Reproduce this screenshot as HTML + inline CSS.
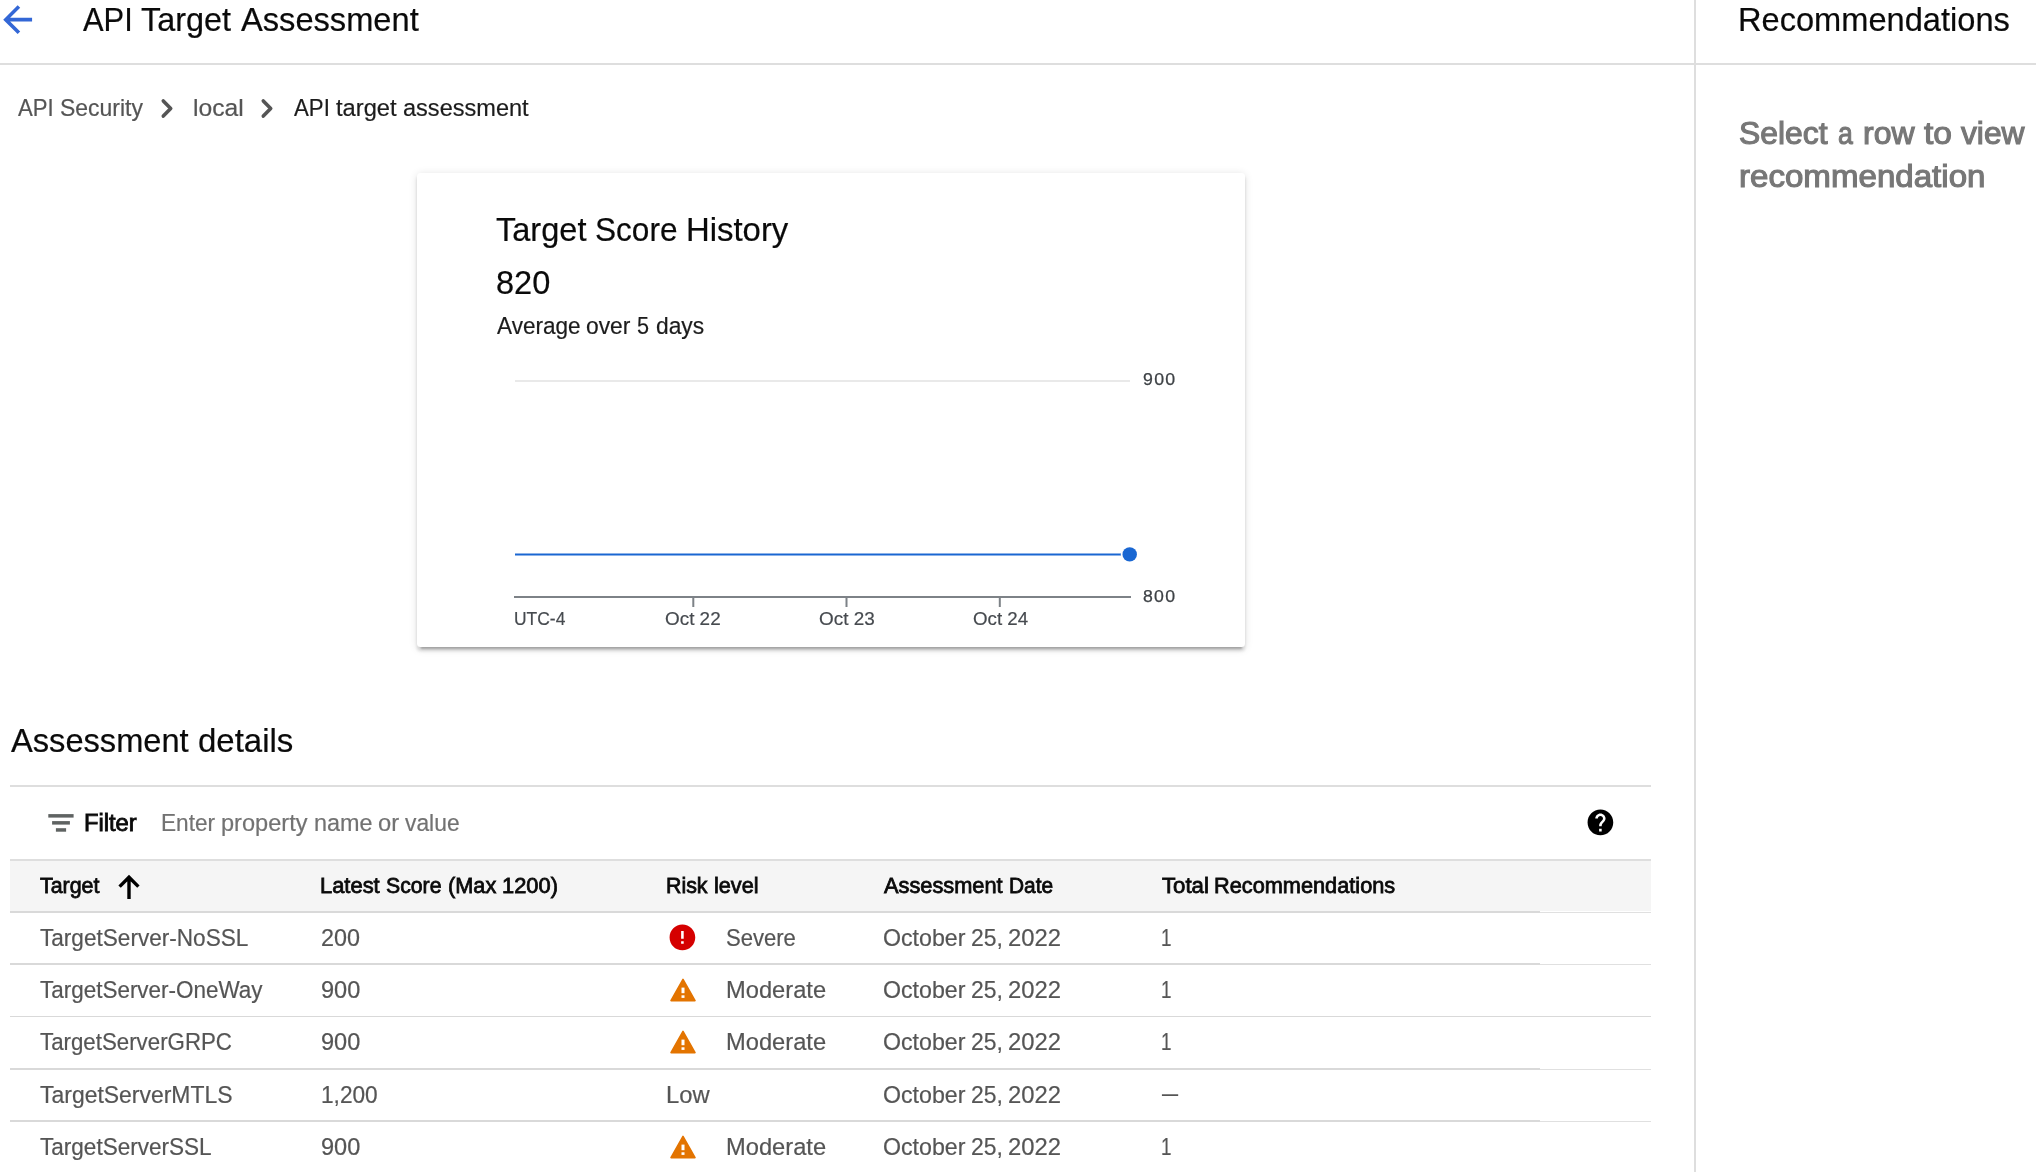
<!DOCTYPE html>
<html lang="en"><head><meta charset="utf-8"><title>API Target Assessment</title>
<style>
html,body{margin:0;padding:0;background:#fff}
body{width:2036px;height:1172px;position:relative;overflow:hidden;font-family:"Liberation Sans",sans-serif;-webkit-font-smoothing:antialiased}
.t{position:absolute;white-space:nowrap;transform-origin:0 0;margin:0;font-weight:normal;display:block}
.w{position:absolute;left:0;top:0;margin:0;font-weight:normal;font-size:0;display:block}
.ln{position:absolute}
svg{position:absolute;overflow:visible}
.card{position:absolute;left:417px;top:173px;width:828px;height:474px;background:#fff;border-radius:3.5px;box-shadow:0 5px 1.8px -3.5px rgba(0,0,0,.2),0 3.5px 3.5px 0 rgba(0,0,0,.14),0 1.8px 9px 0 rgba(0,0,0,.12)}
.thead{position:absolute;left:10px;top:861px;width:1641px;height:50px;background:#f5f5f5}
#app{position:absolute;left:0;top:0;width:2036px;height:1172px;will-change:transform}
</style></head><body><div id="app">

<header>
<svg style="left:-3.9px;top:-1.6px" width="43.3" height="43.3" viewBox="0 0 24 24"><path fill="#3367d6" d="M20 11H7.83l5.59-5.59L12 4l-8 8 8 8 1.41-1.41L7.83 13H20v-2z"/></svg>
<h1 class="w"><span class="t" style="left:83.03px;top:-4px;font-size:32.8px;line-height:47px;color:#0a0a0a;transform:scaleX(0.9412);-webkit-text-stroke:0.2px">API</span> <span class="t" style="left:141.10px;top:-4px;font-size:32.8px;line-height:47px;color:#0a0a0a;transform:scaleX(0.9873);-webkit-text-stroke:0.2px">Target</span> <span class="t" style="left:240.61px;top:-4px;font-size:32.8px;line-height:47px;color:#0a0a0a;transform:scaleX(0.9950);-webkit-text-stroke:0.2px">Assessment</span></h1>
<div class="ln" style="left:0px;top:63px;width:2036px;height:2px;background:#dedede"></div>
</header>
<nav>
<a class="w"><span class="t" style="left:18.05px;top:90px;font-size:23.7px;line-height:36px;color:#555;transform:scaleX(0.9344);-webkit-text-stroke:0.2px">API</span> <span class="t" style="left:59.58px;top:90px;font-size:23.7px;line-height:36px;color:#555;transform:scaleX(0.9695);-webkit-text-stroke:0.2px">Security</span></a>
<svg style="left:150.0px;top:90px" width="40" height="40" viewBox="0 0 40 40"><path fill="none" stroke="#555" stroke-width="3.6" stroke-linecap="round" stroke-linejoin="round" d="M13.3 10.9L20.7 18.5L13.3 26.1"/></svg>
<a class="t" style="left:193.24px;top:90px;font-size:23.7px;line-height:36px;color:#555;transform:scaleX(1.0407);-webkit-text-stroke:0.2px">local</a>
<svg style="left:249.9px;top:90px" width="40" height="40" viewBox="0 0 40 40"><path fill="none" stroke="#555" stroke-width="3.6" stroke-linecap="round" stroke-linejoin="round" d="M13.3 10.9L20.7 18.5L13.3 26.1"/></svg>
<span class="w"><span class="t" style="left:294.25px;top:90px;font-size:23.7px;line-height:36px;color:#1c1c1c;transform:scaleX(0.9386);-webkit-text-stroke:0.2px">API</span> <span class="t" style="left:335.84px;top:90px;font-size:23.7px;line-height:36px;color:#1c1c1c;transform:scaleX(1.0006);-webkit-text-stroke:0.2px">target</span> <span class="t" style="left:403.32px;top:90px;font-size:23.7px;line-height:36px;color:#1c1c1c;transform:scaleX(0.9942);-webkit-text-stroke:0.2px">assessment</span></span>
</nav>
<section class="card"></section>
<h2 class="w"><span class="t" style="left:496.07px;top:206px;font-size:32.8px;line-height:47px;color:#0a0a0a;transform:scaleX(0.9920);-webkit-text-stroke:0.2px">Target</span> <span class="t" style="left:595.43px;top:206px;font-size:32.8px;line-height:47px;color:#0a0a0a;transform:scaleX(0.9627);-webkit-text-stroke:0.2px">Score</span> <span class="t" style="left:685.88px;top:206px;font-size:32.8px;line-height:47px;color:#0a0a0a;transform:scaleX(1.0023);-webkit-text-stroke:0.2px">History</span></h2>
<div class="t" style="left:495.99px;top:259px;font-size:32.8px;line-height:47px;color:#0a0a0a;transform:scaleX(0.9918);-webkit-text-stroke:0.2px">820</div>
<div class="w"><span class="t" style="left:496.75px;top:308px;font-size:23.7px;line-height:36px;color:#1c1c1c;transform:scaleX(0.9518);-webkit-text-stroke:0.2px">Average</span> <span class="t" style="left:586.26px;top:308px;font-size:23.7px;line-height:36px;color:#1c1c1c;transform:scaleX(0.9629);-webkit-text-stroke:0.2px">over</span> <span class="t" style="left:637.48px;top:308px;font-size:23.7px;line-height:36px;color:#1c1c1c;transform:scaleX(0.9132);-webkit-text-stroke:0.2px">5</span> <span class="t" style="left:655.65px;top:308px;font-size:23.7px;line-height:36px;color:#1c1c1c;transform:scaleX(0.9627);-webkit-text-stroke:0.2px">days</span></div>
<svg style="left:0;top:0" width="2036" height="700" viewBox="0 0 2036 700">
<rect x="515" y="380" width="615" height="2" fill="#e9e9e9"/>
<rect x="514" y="596" width="617" height="2" fill="#7d8287"/>
<rect x="692.3" y="597" width="2" height="10" fill="#7d8287"/>
<rect x="845.5" y="597" width="2" height="10" fill="#7d8287"/>
<rect x="998.8" y="597" width="2" height="10" fill="#7d8287"/>
<line x1="515" y1="554.5" x2="1129" y2="554.5" stroke="#1a67d2" stroke-width="2.1"/>
<circle cx="1129.7" cy="554.4" r="8.9" fill="#fff"/>
<circle cx="1129.7" cy="554.4" r="7.2" fill="#1a67d2"/>
</svg>
<span class="t" style="left:513.85px;top:603px;font-size:18.7px;line-height:31px;color:#464a4f;transform:scaleX(0.9335);-webkit-text-stroke:0.2px">UTC-4</span>
<span class="t" style="left:664.81px;top:603px;font-size:18.7px;line-height:31px;color:#464a4f;transform:scaleX(1.0105);-webkit-text-stroke:0.2px">Oct 22</span>
<span class="t" style="left:818.90px;top:603px;font-size:18.7px;line-height:31px;color:#464a4f;transform:scaleX(1.0120);-webkit-text-stroke:0.2px">Oct 23</span>
<span class="t" style="left:972.91px;top:603px;font-size:18.7px;line-height:31px;color:#464a4f;transform:scaleX(1.0013);-webkit-text-stroke:0.2px">Oct 24</span>
<span class="t" style="left:1142.90px;top:365px;font-size:16.6px;line-height:29px;color:#3e4246;transform:scaleX(1.0685);letter-spacing:1.2px;-webkit-text-stroke:0.25px">900</span>
<span class="t" style="left:1142.96px;top:582px;font-size:16.6px;line-height:29px;color:#3e4246;transform:scaleX(1.0664);letter-spacing:1.2px;-webkit-text-stroke:0.25px">800</span>
<h2 class="w"><span class="t" style="left:11.34px;top:717px;font-size:32.8px;line-height:47px;color:#0a0a0a;transform:scaleX(0.9947);-webkit-text-stroke:0.2px">Assessment</span> <span class="t" style="left:198.24px;top:717px;font-size:32.8px;line-height:47px;color:#0a0a0a;transform:scaleX(1.0057);-webkit-text-stroke:0.2px">details</span></h2>
<div class="ln" style="left:10px;top:785px;width:1641px;height:2px;background:#dedede"></div>
<svg style="left:0;top:800px" width="120" height="45" viewBox="0 800 120 45"><g fill="#5f6362"><rect x="48.3" y="814.1" width="25.3" height="3.5"/><rect x="52.1" y="821.1" width="17.8" height="3.5"/><rect x="55.9" y="828.2" width="10.2" height="3.5"/></g></svg>
<span class="t" style="left:84.08px;top:805px;font-size:23.1px;line-height:36px;color:#0a0a0a;transform:scaleX(1.0265);-webkit-text-stroke:0.83px">Filter</span>
<span class="w"><span class="t" style="left:160.74px;top:805px;font-size:23.7px;line-height:36px;color:#727272;transform:scaleX(0.9541);-webkit-text-stroke:0.2px">Enter</span> <span class="t" style="left:220.82px;top:805px;font-size:23.7px;line-height:36px;color:#727272;transform:scaleX(0.9955);-webkit-text-stroke:0.2px">property</span> <span class="t" style="left:313.64px;top:805px;font-size:23.7px;line-height:36px;color:#727272;transform:scaleX(0.9880);-webkit-text-stroke:0.2px">name</span> <span class="t" style="left:378.08px;top:805px;font-size:23.7px;line-height:36px;color:#727272;transform:scaleX(1.0012);-webkit-text-stroke:0.2px">or</span> <span class="t" style="left:405.42px;top:805px;font-size:23.7px;line-height:36px;color:#727272;transform:scaleX(0.9640);-webkit-text-stroke:0.2px">value</span></span>
<svg style="left:1584.98px;top:807.2px" width="30.84" height="30.84" viewBox="0 0 24 24"><path fill="#000" d="M12 2C6.48 2 2 6.48 2 12s4.48 10 10 10 10-4.48 10-10S17.52 2 12 2zm1 17h-2v-2h2v2zm2.07-7.75l-.9.92C13.45 12.9 13 13.5 13 15h-2v-.5c0-1.1.45-2.1 1.17-2.83l1.24-1.26c.37-.36.59-.86.59-1.41 0-1.1-.9-2-2-2s-2 .9-2 2H8c0-2.21 1.79-4 4-4s4 1.79 4 4c0 .88-.36 1.68-.93 2.25z"/></svg>
<div class="ln" style="left:10px;top:859px;width:1641px;height:2px;background:#dedede"></div>
<div class="thead"></div>
<div class="t" style="left:40.10px;top:869px;font-size:21.2px;line-height:33px;color:#0a0a0a;transform:scaleX(1.0098);-webkit-text-stroke:0.76px">Target</div>
<div class="w"><span class="t" style="left:320.10px;top:869px;font-size:21.2px;line-height:33px;color:#0a0a0a;transform:scaleX(1.0337);-webkit-text-stroke:0.76px">Latest</span> <span class="t" style="left:386.16px;top:869px;font-size:21.2px;line-height:33px;color:#0a0a0a;transform:scaleX(1.0017);-webkit-text-stroke:0.76px">Score</span> <span class="t" style="left:447.52px;top:869px;font-size:21.2px;line-height:33px;color:#0a0a0a;transform:scaleX(1.0244);-webkit-text-stroke:0.76px">(Max</span> <span class="t" style="left:502.12px;top:869px;font-size:21.2px;line-height:33px;color:#0a0a0a;transform:scaleX(1.0321);-webkit-text-stroke:0.76px">1200)</span></div>
<div class="w"><span class="t" style="left:666.03px;top:869px;font-size:21.2px;line-height:33px;color:#0a0a0a;transform:scaleX(1.0087);-webkit-text-stroke:0.76px">Risk</span> <span class="t" style="left:713.79px;top:869px;font-size:21.2px;line-height:33px;color:#0a0a0a;transform:scaleX(1.0205);-webkit-text-stroke:0.76px">level</span></div>
<div class="w"><span class="t" style="left:884.35px;top:869px;font-size:21.2px;line-height:33px;color:#0a0a0a;transform:scaleX(1.0279);-webkit-text-stroke:0.76px">Assessment</span> <span class="t" style="left:1009.38px;top:869px;font-size:21.2px;line-height:33px;color:#0a0a0a;transform:scaleX(0.9867);-webkit-text-stroke:0.76px">Date</span></div>
<div class="w"><span class="t" style="left:1161.60px;top:869px;font-size:21.2px;line-height:33px;color:#0a0a0a;transform:scaleX(1.0464);-webkit-text-stroke:0.76px">Total</span> <span class="t" style="left:1214.40px;top:869px;font-size:21.2px;line-height:33px;color:#0a0a0a;transform:scaleX(1.0257);-webkit-text-stroke:0.76px">Recommendations</span></div>
<svg style="left:110px;top:868px" width="40" height="40" viewBox="110 868 40 40"><path d="M119.6 886.6 L129 877.2 L138.4 886.6 M129 877.6 V899" fill="none" stroke="#000" stroke-width="3.4"/></svg>
<div class="ln" style="left:10px;top:911px;width:1530px;height:2px;background:#d9d9d9"></div>
<div class="ln" style="left:1540px;top:912px;width:111px;height:1px;background:#e0e0e0"></div>
<div class="ln" style="left:10px;top:963px;width:1530px;height:2px;background:#d9d9d9"></div>
<div class="ln" style="left:1540px;top:964px;width:111px;height:1px;background:#e0e0e0"></div>
<div class="ln" style="left:10px;top:1016px;width:1641px;height:1px;background:#d9d9d9"></div>
<div class="ln" style="left:10px;top:1068px;width:1530px;height:2px;background:#d9d9d9"></div>
<div class="ln" style="left:1540px;top:1069px;width:111px;height:1px;background:#e0e0e0"></div>
<div class="ln" style="left:10px;top:1120px;width:1530px;height:2px;background:#d9d9d9"></div>
<div class="ln" style="left:1540px;top:1121px;width:111px;height:1px;background:#e0e0e0"></div>
<div class="t" style="left:39.79px;top:920px;font-size:23.7px;line-height:36px;color:#555;transform:scaleX(0.9534);-webkit-text-stroke:0.2px">TargetServer-NoSSL</div>
<div class="t" style="left:320.72px;top:920px;font-size:23.7px;line-height:36px;color:#555;transform:scaleX(0.9863);-webkit-text-stroke:0.2px">200</div>
<div class="t" style="left:726.09px;top:920px;font-size:23.7px;line-height:36px;color:#555;transform:scaleX(0.9312);-webkit-text-stroke:0.2px">Severe</div>
<div class="w"><span class="t" style="left:883.00px;top:920px;font-size:23.7px;line-height:36px;color:#555;transform:scaleX(0.9781);-webkit-text-stroke:0.2px">October</span> <span class="t" style="left:971.32px;top:920px;font-size:23.7px;line-height:36px;color:#555;transform:scaleX(0.9673);-webkit-text-stroke:0.2px">25,</span> <span class="t" style="left:1008.09px;top:920px;font-size:23.7px;line-height:36px;color:#555;transform:scaleX(1.0057);-webkit-text-stroke:0.2px">2022</span></div>
<div class="t" style="left:1161.34px;top:920px;font-size:23.7px;line-height:36px;color:#555;transform:scaleX(0.7962);-webkit-text-stroke:0.2px">1</div>
<svg style="left:667.08px;top:922.28px" width="30.84" height="30.84" viewBox="0 0 24 24"><path fill="#d50000" d="M12 2C6.48 2 2 6.48 2 12s4.48 10 10 10 10-4.48 10-10S17.52 2 12 2zm1 15h-2v-2h2v2zm0-4h-2V7h2v6z"/></svg>
<div class="t" style="left:39.79px;top:972px;font-size:23.7px;line-height:36px;color:#555;transform:scaleX(0.9480);-webkit-text-stroke:0.2px">TargetServer-OneWay</div>
<div class="t" style="left:320.79px;top:972px;font-size:23.7px;line-height:36px;color:#555;transform:scaleX(0.9948);-webkit-text-stroke:0.2px">900</div>
<div class="t" style="left:725.86px;top:972px;font-size:23.7px;line-height:36px;color:#555;transform:scaleX(1.0002);-webkit-text-stroke:0.2px">Moderate</div>
<div class="w"><span class="t" style="left:883.00px;top:972px;font-size:23.7px;line-height:36px;color:#555;transform:scaleX(0.9781);-webkit-text-stroke:0.2px">October</span> <span class="t" style="left:971.32px;top:972px;font-size:23.7px;line-height:36px;color:#555;transform:scaleX(0.9673);-webkit-text-stroke:0.2px">25,</span> <span class="t" style="left:1008.09px;top:972px;font-size:23.7px;line-height:36px;color:#555;transform:scaleX(1.0057);-webkit-text-stroke:0.2px">2022</span></div>
<div class="t" style="left:1161.34px;top:972px;font-size:23.7px;line-height:36px;color:#555;transform:scaleX(0.7962);-webkit-text-stroke:0.2px">1</div>
<svg style="left:667.90px;top:974.80px" width="30" height="30" viewBox="0 0 30 30"><path fill="#e37400" stroke="#e37400" stroke-width="1.6" stroke-linejoin="round" d="M15 4.4 L27 25.6 H3 Z"/><rect x="13.5" y="12.6" width="3" height="5.6" fill="#fff"/><rect x="13.5" y="20.3" width="3" height="2.6" fill="#fff"/></svg>
<div class="t" style="left:39.79px;top:1024px;font-size:23.7px;line-height:36px;color:#555;transform:scaleX(0.9408);-webkit-text-stroke:0.2px">TargetServerGRPC</div>
<div class="t" style="left:320.79px;top:1024px;font-size:23.7px;line-height:36px;color:#555;transform:scaleX(0.9948);-webkit-text-stroke:0.2px">900</div>
<div class="t" style="left:725.86px;top:1024px;font-size:23.7px;line-height:36px;color:#555;transform:scaleX(1.0002);-webkit-text-stroke:0.2px">Moderate</div>
<div class="w"><span class="t" style="left:883.00px;top:1024px;font-size:23.7px;line-height:36px;color:#555;transform:scaleX(0.9781);-webkit-text-stroke:0.2px">October</span> <span class="t" style="left:971.32px;top:1024px;font-size:23.7px;line-height:36px;color:#555;transform:scaleX(0.9673);-webkit-text-stroke:0.2px">25,</span> <span class="t" style="left:1008.09px;top:1024px;font-size:23.7px;line-height:36px;color:#555;transform:scaleX(1.0057);-webkit-text-stroke:0.2px">2022</span></div>
<div class="t" style="left:1161.34px;top:1024px;font-size:23.7px;line-height:36px;color:#555;transform:scaleX(0.7962);-webkit-text-stroke:0.2px">1</div>
<svg style="left:667.90px;top:1026.80px" width="30" height="30" viewBox="0 0 30 30"><path fill="#e37400" stroke="#e37400" stroke-width="1.6" stroke-linejoin="round" d="M15 4.4 L27 25.6 H3 Z"/><rect x="13.5" y="12.6" width="3" height="5.6" fill="#fff"/><rect x="13.5" y="20.3" width="3" height="2.6" fill="#fff"/></svg>
<div class="t" style="left:39.78px;top:1077px;font-size:23.7px;line-height:36px;color:#555;transform:scaleX(0.9688);-webkit-text-stroke:0.2px">TargetServerMTLS</div>
<div class="t" style="left:321.17px;top:1077px;font-size:23.7px;line-height:36px;color:#555;transform:scaleX(0.9568);-webkit-text-stroke:0.2px">1,200</div>
<div class="t" style="left:665.55px;top:1077px;font-size:23.7px;line-height:36px;color:#555;transform:scaleX(1.0028);-webkit-text-stroke:0.2px">Low</div>
<div class="w"><span class="t" style="left:883.00px;top:1077px;font-size:23.7px;line-height:36px;color:#555;transform:scaleX(0.9781);-webkit-text-stroke:0.2px">October</span> <span class="t" style="left:971.32px;top:1077px;font-size:23.7px;line-height:36px;color:#555;transform:scaleX(0.9673);-webkit-text-stroke:0.2px">25,</span> <span class="t" style="left:1008.09px;top:1077px;font-size:23.7px;line-height:36px;color:#555;transform:scaleX(1.0057);-webkit-text-stroke:0.2px">2022</span></div>
<div class="t" style="left:1162.37px;top:1075px;font-size:23.7px;line-height:36px;color:#555;transform:scaleX(0.6782);-webkit-text-stroke:0.2px">—</div>
<div class="t" style="left:39.79px;top:1129px;font-size:23.7px;line-height:36px;color:#555;transform:scaleX(0.9517);-webkit-text-stroke:0.2px">TargetServerSSL</div>
<div class="t" style="left:320.79px;top:1129px;font-size:23.7px;line-height:36px;color:#555;transform:scaleX(0.9948);-webkit-text-stroke:0.2px">900</div>
<div class="t" style="left:725.86px;top:1129px;font-size:23.7px;line-height:36px;color:#555;transform:scaleX(1.0002);-webkit-text-stroke:0.2px">Moderate</div>
<div class="w"><span class="t" style="left:883.00px;top:1129px;font-size:23.7px;line-height:36px;color:#555;transform:scaleX(0.9781);-webkit-text-stroke:0.2px">October</span> <span class="t" style="left:971.32px;top:1129px;font-size:23.7px;line-height:36px;color:#555;transform:scaleX(0.9673);-webkit-text-stroke:0.2px">25,</span> <span class="t" style="left:1008.09px;top:1129px;font-size:23.7px;line-height:36px;color:#555;transform:scaleX(1.0057);-webkit-text-stroke:0.2px">2022</span></div>
<div class="t" style="left:1161.34px;top:1129px;font-size:23.7px;line-height:36px;color:#555;transform:scaleX(0.7962);-webkit-text-stroke:0.2px">1</div>
<svg style="left:667.90px;top:1131.70px" width="30" height="30" viewBox="0 0 30 30"><path fill="#e37400" stroke="#e37400" stroke-width="1.6" stroke-linejoin="round" d="M15 4.4 L27 25.6 H3 Z"/><rect x="13.5" y="12.6" width="3" height="5.6" fill="#fff"/><rect x="13.5" y="20.3" width="3" height="2.6" fill="#fff"/></svg>
<aside>
<div class="ln" style="left:1694px;top:0px;width:2px;height:1172px;background:#dedede"></div>
<h1 class="t" style="left:1738.22px;top:-4px;font-size:32.8px;line-height:47px;color:#0a0a0a;transform:scaleX(0.9942);-webkit-text-stroke:0.2px">Recommendations</h1>
<div class="w"><span class="t" style="left:1739.33px;top:110px;font-size:32.0px;line-height:46px;color:#777;transform:scaleX(0.9954);-webkit-text-stroke:1.15px">Select</span> <span class="t" style="left:1837.88px;top:110px;font-size:32.0px;line-height:46px;color:#777;transform:scaleX(0.8323);-webkit-text-stroke:1.15px">a</span> <span class="t" style="left:1863.03px;top:110px;font-size:32.0px;line-height:46px;color:#777;transform:scaleX(0.9982);-webkit-text-stroke:1.15px">row</span> <span class="t" style="left:1923.99px;top:110px;font-size:32.0px;line-height:46px;color:#777;transform:scaleX(1.0480);-webkit-text-stroke:1.15px">to</span> <span class="t" style="left:1961.28px;top:110px;font-size:32.0px;line-height:46px;color:#777;transform:scaleX(0.9916);-webkit-text-stroke:1.15px">view</span></div>
<div class="t" style="left:1739.00px;top:153px;font-size:32.0px;line-height:46px;color:#777;transform:scaleX(1.0340);-webkit-text-stroke:1.15px">recommendation</div>
</aside>
</div></body></html>
